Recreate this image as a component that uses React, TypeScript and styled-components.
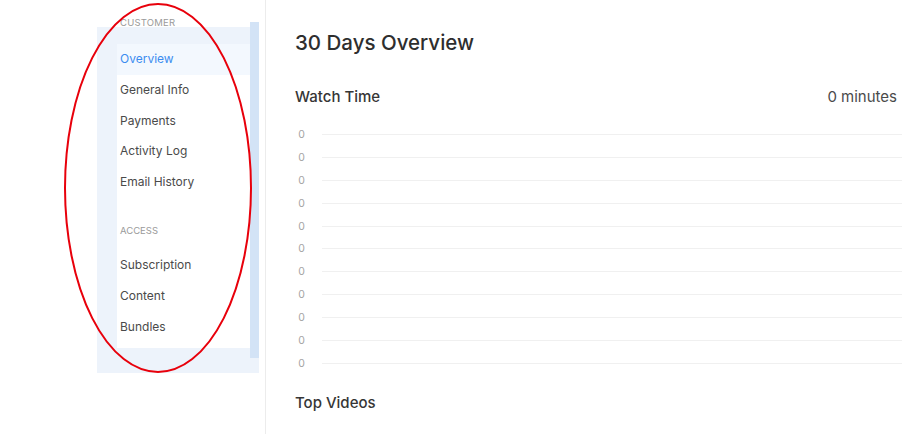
import React from 'react';
import styled, { createGlobalStyle } from 'styled-components';

const GlobalStyle = createGlobalStyle`
  html, body {
    margin: 0;
    padding: 0;
    background: #ffffff;
    font-family: Inter, "Liberation Sans", Arial, sans-serif;
  }
`;

const customerItems = ['Overview', 'General Info', 'Payments', 'Activity Log', 'Email History'];
const accessItems = ['Subscription', 'Content', 'Bundles'];

const Page = styled.div`
  position: relative;
  display: flex;
  width: 902px;
  height: 434px;
  overflow: hidden;
`;

const Sidebar = styled.aside`
  width: 266px;
  flex-shrink: 0;
  box-sizing: border-box;
  border-right: 1px solid #ececec;
  padding: 17px 0 0 97px;
`;

const SectionLabel = styled.div`
  font-size: 9.5px;
  line-height: 12px;
  letter-spacing: 0.2px;
  color: #9a9a9a;
  text-transform: uppercase;
  padding-left: 23px;
`;

const Glow = styled.div`
  width: 162px;
  margin-top: -2px;
  box-sizing: border-box;
  padding: 17px 9px 25px 20px;
  background: #edf3fb;
`;

const Panel = styled.div`
  position: relative;
  background: #ffffff;
  padding-bottom: 6px;

  &::after {
    content: '';
    position: absolute;
    top: -22px;
    bottom: -10px;
    right: -9px;
    width: 9px;
    background: #d3e3f6;
  }
`;

const NavItem = styled.div<{ $active?: boolean }>`
  height: 30.8px;
  line-height: 30.8px;
  padding-left: 3px;
  font-size: 12px;
  color: ${(p) => (p.$active ? '#3b8cf0' : '#4a4a4a')};
  background: ${(p) => (p.$active ? '#f3f8fe' : 'transparent')};
`;

const AccessBlock = styled.div`
  height: 52px;
  display: flex;
  align-items: flex-end;
  padding: 0 0 13px 3px;
  box-sizing: border-box;
  font-size: 9.5px;
  line-height: 12px;
  color: #9a9a9a;
  text-transform: uppercase;
`;

const Main = styled.main`
  flex: 1;
  padding: 31px 0 0 29px;
  color: #333333;
`;

const Title = styled.h1`
  margin: 0;
  font-size: 20.5px;
  line-height: 24px;
  font-weight: 500;
  color: #2e2e2e;
`;

const CardHeader = styled.div`
  display: flex;
  justify-content: space-between;
  align-items: center;
  margin-top: 33px;
  padding-right: 5px;
  font-size: 15px;
  line-height: 18px;
`;

const HeaderTitle = styled.span`
  font-weight: 500;
  color: #363636;
`;

const HeaderValue = styled.span`
  color: #4a4a4a;
`;

const Chart = styled.div`
  margin-top: 17px;
`;

const ChartRow = styled.div`
  display: flex;
  align-items: center;
  height: 22.9px;
`;

const Tick = styled.span`
  width: 13px;
  text-align: center;
  font-size: 10.5px;
  color: #a5a5a5;
`;

const GridLine = styled.div`
  flex: 1;
  height: 1px;
  margin-left: 14px;
  background: #f0f0f0;
`;

const SectionTitle = styled.h2`
  margin: 19px 0 0;
  font-size: 15px;
  line-height: 18px;
  font-weight: 500;
  color: #363636;
`;

const Annotation = styled.svg`
  position: absolute;
  left: 62px;
  top: 2px;
  pointer-events: none;
`;

export default function App() {
  return (
    <>
      <GlobalStyle />
      <Page>
        <Sidebar>
          <SectionLabel>Customer</SectionLabel>
          <Glow>
            <Panel>
              {customerItems.map((item, i) => (
                <NavItem key={item} $active={i === 0}>
                  {item}
                </NavItem>
              ))}
              <AccessBlock>Access</AccessBlock>
              {accessItems.map((item) => (
                <NavItem key={item}>{item}</NavItem>
              ))}
            </Panel>
          </Glow>
        </Sidebar>

        <Main>
          <Title>30 Days Overview</Title>
          <CardHeader>
            <HeaderTitle>Watch Time</HeaderTitle>
            <HeaderValue>0 minutes</HeaderValue>
          </CardHeader>
          <Chart>
            {Array.from({ length: 11 }).map((_, i) => (
              <ChartRow key={i}>
                <Tick>0</Tick>
                <GridLine />
              </ChartRow>
            ))}
          </Chart>
          <SectionTitle>Top Videos</SectionTitle>
        </Main>

        <Annotation width="194" height="374" viewBox="0 0 194 374">
          <ellipse cx="96" cy="186" rx="93" ry="184" fill="none" stroke="#e8000b" strokeWidth="2" />
        </Annotation>
      </Page>
    </>
  );
}
